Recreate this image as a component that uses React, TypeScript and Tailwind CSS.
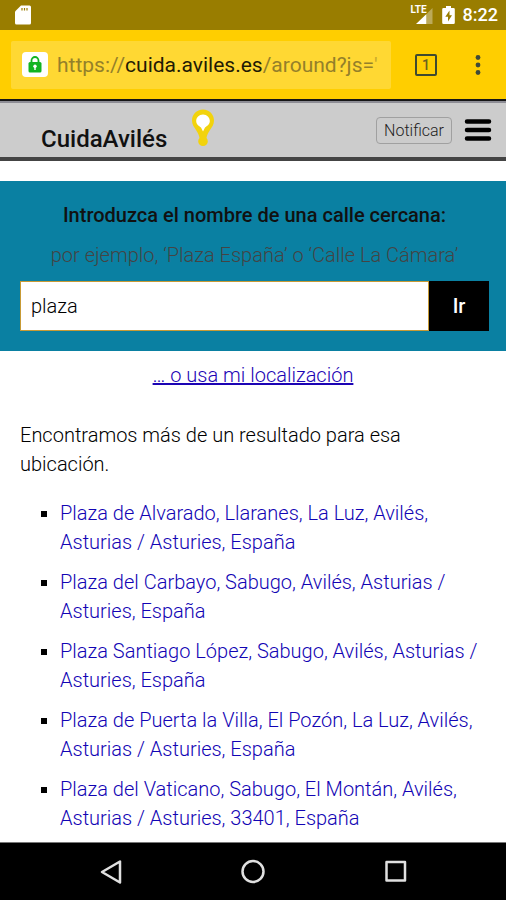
import React, { useState } from 'react';

const results = [
  'Plaza de Alvarado, Llaranes, La Luz, Avilés, Asturias / Asturies, España',
  'Plaza del Carbayo, Sabugo, Avilés, Asturias / Asturies, España',
  'Plaza Santiago López, Sabugo, Avilés, Asturias / Asturies, España',
  'Plaza de Puerta la Villa, El Pozón, La Luz, Avilés, Asturias / Asturies, España',
  'Plaza del Vaticano, Sabugo, El Montán, Avilés, Asturias / Asturies, 33401, España',
];

function StatusBar() {
  return (
    <div className="flex h-[30px] items-center bg-[#997d00] pr-2 pl-[15px] text-white">
      <svg width="16" height="20" viewBox="0 0 16 20">
        <path d="M6 0.5h8.5a1.500 1.500 0 0 1 1.500 1.500v16a1.500 1.500 0 0 1-1.500 1.500h-13A1.500 1.500 0 0 1 0 18V6.500z" fill="#fff" />
        <path d="M7 3v2.500M9.500 3v2.500M12 3v2.500" stroke="#997d00" strokeWidth="1.200" />
      </svg>
      <div className="ml-auto flex items-center">
        <div className="relative h-5 w-[23px]">
          <svg className="absolute top-0 left-0" width="23" height="20" viewBox="0 0 23 20">
            <path d="M16 8.500L21.500 3v16H16z" fill="#fff" opacity="0.35" />
            <path d="M5 19L15.500 9v10z" fill="#fff" />
          </svg>
          <span className="absolute top-0 left-0 text-[10px] leading-[10px] font-bold">LTE</span>
        </div>
        <svg className="ml-2" width="13" height="20" viewBox="0 0 13 20">
          <path d="M4 1h5v2h2.500A1.300 1.300 0 0 1 12.800 4.300v13.400a1.300 1.300 0 0 1-1.300 1.300h-10A1.300 1.300 0 0 1 .2 17.700V4.300A1.300 1.300 0 0 1 1.500 3H4z" fill="#fff" />
          <path d="M7.500 5.500L3.300 11.800H6v4.700l4-6.300H7.500z" fill="#997d00" />
        </svg>
        <span className="ml-2 text-lg leading-5 font-medium">8:22</span>
      </div>
    </div>
  );
}

function AddressBar() {
  return (
    <div className="flex h-[71px] items-center border-b-2 border-[#161616] bg-[#ffce00] pr-[18px] pl-[11px]">
      <div className="flex h-12 min-w-0 flex-1 items-center rounded-xs bg-[#ffd833] pl-[11px]">
        <span className="flex h-[25px] w-[26px] shrink-0 items-center justify-center rounded-sm bg-white">
          <svg width="14" height="17" viewBox="0 0 14 17">
            <path d="M3.500 7V4.500a3.500 3.500 0 0 1 7 0V7" fill="none" stroke="#12b422" strokeWidth="1.800" />
            <rect x="0.500" y="6" width="13" height="10.500" rx="1.500" fill="#12b422" />
            <circle cx="7" cy="10.300" r="1.700" fill="#fff" />
            <path d="M6.300 10h1.400v4H6.300z" fill="#fff" />
          </svg>
        </span>
        <p className="ml-[9px] text-[21px] leading-7 whitespace-nowrap text-[#94802a]">
          https://<span className="text-[#1f1b05]">cuida.aviles.es</span>/around?js=<span className="text-[#c8a92c]">'</span>
        </p>
      </div>
      <button
        type="button"
        aria-label="Pestañas"
        className="ml-6 flex h-[22px] w-[22px] items-center justify-center rounded-xs border-2 border-[#3f4a30] text-sm leading-4 font-medium text-[#6b6020]"
      >
        1
      </button>
      <button type="button" aria-label="Más opciones" className="ml-[31px]">
        <svg width="20" height="22" viewBox="0 0 20 22" fill="#3f4a3a">
          <circle cx="10" cy="3.500" r="2.400" />
          <circle cx="10" cy="11" r="2.400" />
          <circle cx="10" cy="18.500" r="2.400" />
        </svg>
      </button>
    </div>
  );
}

function SiteHeader() {
  return (
    <header className="flex h-[60px] items-center border-t-2 border-b-4 border-t-[#8d8d95] border-b-[#444444] bg-[#cccccc] pr-[14px] pl-[41px]">
      <a href="#" className="flex text-2xl leading-7 font-medium text-[#111111]">
        <span className="mt-[18px]">CuidaAvilés</span>
        <svg className="mt-0.5 ml-6" width="24" height="40" viewBox="0 0 24 40">
          <path
            d="M12 .5C5.500 .5 1 5.500 1 11.500c0 4 2 6.500 4 9.500 1.700 2.600 3.200 5.500 3.500 8a4.800 4.800 0 1 0 7 0c.3-2.500 1.800-5.400 3.500-8 2-3 4-5.500 4-9.500C23 5.500 18.500 .5 12 .5z"
            fill="#f2d30c"
          />
          <path d="M12 5.500c-4 0-6.800 3-6.800 6.500S8 17 10 18.500l2 4 2-4c2-1.500 4.800-3 4.800-6.500S16 5.500 12 5.500z" fill="#fff" />
        </svg>
      </a>
      <a
        href="#"
        className="ml-auto rounded border border-[#a0a0a0] px-[7px] text-base leading-[25px] font-light text-[#222222]"
      >
        Notificar
      </a>
      <button type="button" aria-label="Menú" className="ml-3">
        <svg width="28" height="24" viewBox="0 0 28 24" stroke="#000" strokeWidth="4.500" strokeLinecap="round">
          <path d="M3 3.500h22M3 12h22M3 20.500h22" />
        </svg>
      </button>
    </header>
  );
}

function SearchForm() {
  const [query, setQuery] = useState('plaza');

  return (
    <form
      className="mt-5 bg-[#0a80a2] px-[17px] pt-5 pb-5 pl-5"
      onSubmit={(e) => e.preventDefault()}
    >
      <label htmlFor="pc" className="block text-center text-xl leading-7 font-medium text-[#111111]">
        Introduzca el nombre de una calle cercana:
      </label>
      <p className="mt-3 text-center text-xl leading-7 font-light text-[#444444]">
        por ejemplo, ‘Plaza España’ o ‘Calle La Cámara’
      </p>
      <div className="mt-3 flex items-stretch">
        <input
          id="pc"
          type="text"
          value={query}
          onChange={(e) => setQuery(e.target.value)}
          className="h-[50px] min-w-0 flex-1 border border-[#c79a35] bg-white px-2.5 text-xl font-light text-black outline-none"
        />
        <button type="submit" className="w-[60px] bg-black text-xl font-medium text-white">
          Ir
        </button>
      </div>
    </form>
  );
}

function NavBar() {
  return (
    <nav className="flex h-[58px] items-center justify-center gap-[115px] border-t border-[#777777] bg-black">
      <button type="button" aria-label="Atrás">
        <svg width="28" height="28" viewBox="0 0 28 28" fill="none" stroke="#e0e0e0" strokeWidth="2.500" strokeLinejoin="round">
          <path d="M24 3.500v21L6 14z" />
        </svg>
      </button>
      <button type="button" aria-label="Inicio">
        <svg width="28" height="28" viewBox="0 0 28 28" fill="none" stroke="#e0e0e0" strokeWidth="2.500">
          <circle cx="14" cy="13.500" r="10.500" />
        </svg>
      </button>
      <button type="button" aria-label="Recientes">
        <svg width="28" height="28" viewBox="0 0 28 28" fill="none" stroke="#e0e0e0" strokeWidth="2.500" strokeLinejoin="round">
          <rect x="4.500" y="4" width="18.500" height="18.500" />
        </svg>
      </button>
    </nav>
  );
}

export default function App() {
  return (
    <div className="flex min-h-screen flex-col bg-white font-['Roboto',sans-serif]">
      <StatusBar />
      <AddressBar />
      <SiteHeader />
      <main className="flex-1">
        <SearchForm />
        <p className="mt-[10px] text-center text-xl leading-7 font-light text-[#1c04b4]">
          <a href="#" className="underline">
            … o usa mi localización
          </a>
        </p>
        <div className="px-5 text-xl leading-[29px] font-light text-black">
          <p className="mt-8 pr-10">Encontramos más de un resultado para esa ubicación.</p>
          <ul className="mt-5 flex list-[square] flex-col gap-[11px] pl-10 marker:text-black">
            {results.map((place) => (
              <li key={place}>
                <a href="#" className="text-[#1204b4]">
                  {place}
                </a>
              </li>
            ))}
          </ul>
        </div>
      </main>
      <NavBar />
    </div>
  );
}
